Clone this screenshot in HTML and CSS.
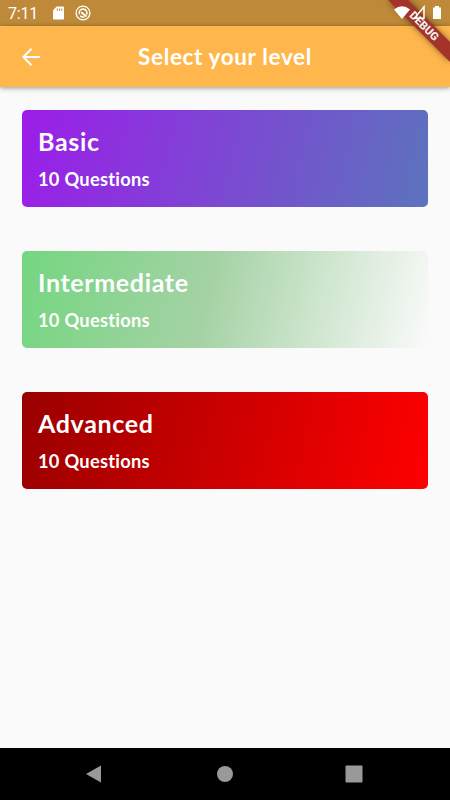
FILE: index.html
```html
<!DOCTYPE html>
<html lang="en">
<head>
<meta charset="utf-8">
<title>Select your level</title>
<link rel="stylesheet" href="styles.css">
</head>
<body>
<div class="status">
  <span class="clock">7:11</span>
  <svg class="sd" viewBox="0 0 12 14"><path d="M4 0h7q1 0 1 1v12q0 1-1 1H1q-1 0-1-1V4z" fill="#fff"/><path d="M4.7 2v2.5M7.2 2v2.5M9.7 2v2.5" stroke="#be8938" stroke-width="1.2"/></svg>
  <svg class="ring" viewBox="0 0 16 16" fill="none" stroke="#fff"><circle cx="8" cy="8" r="6.9" stroke-width="1.3"/><path d="M4.4 9.3A3.9 3.9 0 1 1 11.6 9.5M5.2 10.8A4 4 0 0 0 9.5 11.8" stroke-width="1.5"/><path d="M6.2 7.2l5.3 4.3" stroke-width="1.8"/></svg>
  <svg class="signals" viewBox="0 0 50 16" fill="#fff"><path d="M0 4.5Q8 -1.8 16 4.5L8 14z"/><path d="M30 1.8v11.5H20.5z" fill="none" stroke="#fff" stroke-width="1.5"/><path d="M39 2.5h2V1h4v1.5h2V14h-8z"/></svg>
</div>
<div class="appbar">
  <svg class="back" viewBox="0 0 18 18" fill="none" stroke="#fff" stroke-width="2"><path d="M17.8 9H1.5M9.5 .8L1.4 9l8.1 8.2"/></svg>
  <h1>Select your level</h1>
</div>
<svg class="ribbon" viewBox="0 0 64 64"><path d="M2 0h20L64 42v20z" fill="#a4342a"/><text x="35.5" y="28.8" transform="rotate(45 35.5 28.8)" text-anchor="middle">DEBUG</text></svg>
<main>
  <section class="card basic"><h2>Basic</h2><p>10 Questions</p></section>
  <section class="card intermediate"><h2>Intermediate</h2><p>10 Questions</p></section>
  <section class="card advanced"><h2>Advanced</h2><p>10 Questions</p></section>
</main>
<nav>
  <svg viewBox="0 0 20 20"><path d="M2 10L17 1.5v17z"/></svg>
  <svg viewBox="0 0 20 20"><circle cx="10" cy="10" r="8"/></svg>
  <svg viewBox="0 0 20 20"><rect x="1.5" y="1.5" width="17" height="17" rx="1"/></svg>
</nav>
</body>
</html>
```
FILE: styles.css
```css
* { box-sizing: border-box; }
body { margin: 0; width: 450px; height: 800px; display: flex; flex-direction: column; overflow: hidden; position: relative; background: #fafafa; color: #fff; font-family: Lato, sans-serif; }
h1, h2, p { margin: 0; }
.status { height: 26px; flex: none; background: #be8938; display: flex; align-items: center; padding-left: 8px; }
.clock { width: 45px; font: 16px/26px Roboto, sans-serif; letter-spacing: -.2px; padding-top: 2px; }
.sd { width: 11px; height: 14px; }
.ring { width: 16px; height: 16px; margin-left: 11px; }
.signals { width: 50px; height: 16px; margin-left: 303px; position: relative; z-index: 3; }
.appbar { height: 61px; flex: none; background: #ffb74d; display: flex; align-items: center; justify-content: center; position: relative; box-shadow: 0 1px 5px rgba(0,0,0,.4); }
.back { position: absolute; left: 21.5px; top: 22px; width: 18px; height: 18px; }
h1 { font-size: 22.5px; line-height: 28px; font-weight: 700; letter-spacing: .64px; }
.ribbon { position: absolute; right: 0; top: 0; width: 64px; height: 64px; z-index: 2; filter: drop-shadow(0 0 3px rgba(0,0,0,.5)); }
.ribbon text { font: 900 11.3px Roboto, sans-serif; fill: #eee; }
main { flex: 1; display: flex; flex-direction: column; gap: 43.5px; padding: 22.5px 22px; }
.card { height: 97.5px; border-radius: 5px; padding: 16.5px 16px; }
.basic { background: linear-gradient(103.4deg, #9c1de9, #5c73bd); }
.intermediate { background: linear-gradient(103.4deg, #74d680, #a5d2a5 46%, #fafafa); }
.advanced { background: linear-gradient(103.4deg, #990000, #ff0000); }
h2 { font-size: 25px; line-height: 30px; letter-spacing: .65px; font-weight: 700; }
p { font-size: 18.3px; line-height: 24px; margin-top: 11px; font-weight: 700; letter-spacing: .26px; }
nav { height: 52px; flex: none; background: #000; display: flex; align-items: center; justify-content: space-between; padding: 0 86px 0 84px; }
nav svg { width: 20px; height: 20px; fill: #999; }
nav svg:nth-child(2) { margin-left: 1px; }
```
